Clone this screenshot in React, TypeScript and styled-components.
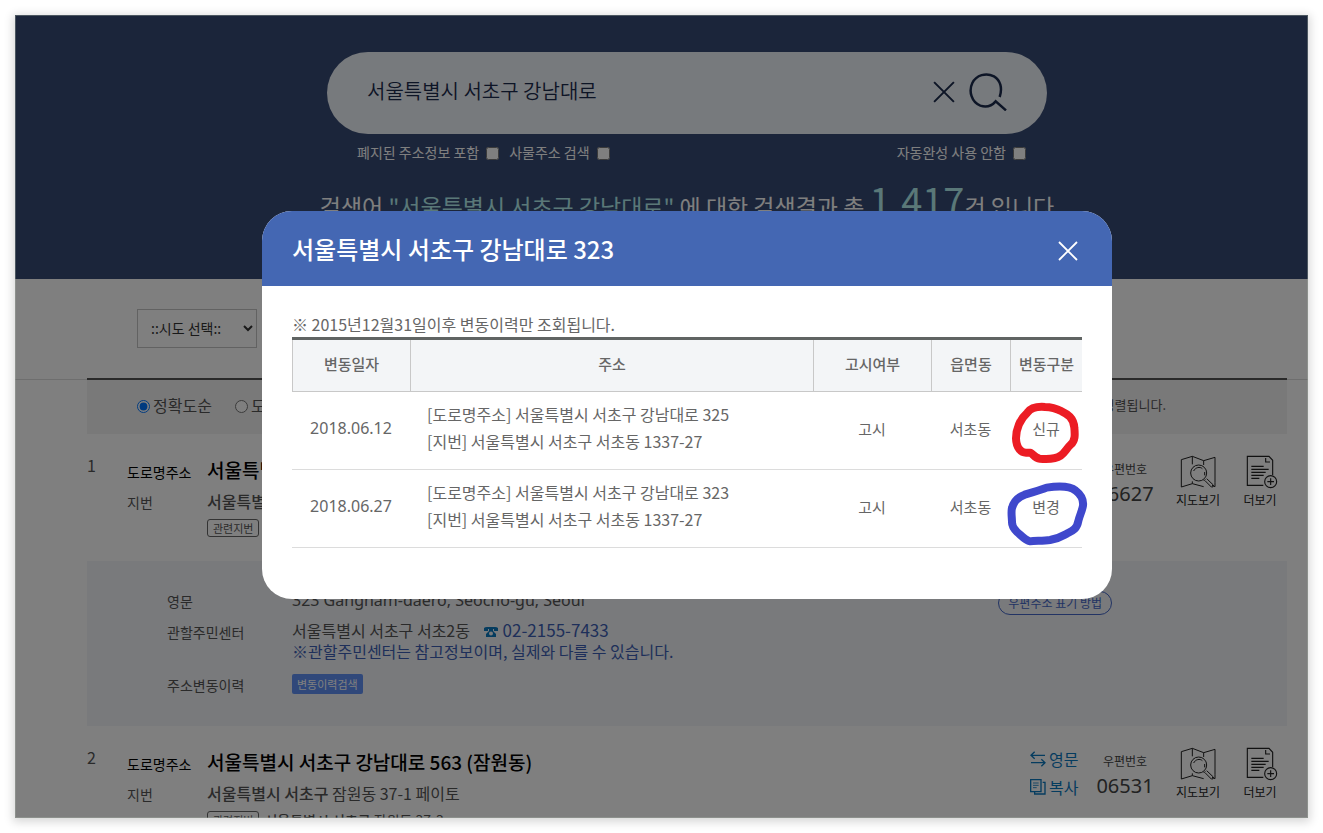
import React, { useState } from "react";
import styled, { createGlobalStyle } from "styled-components";

const latinFont = `"Noto Sans", "Noto Sans CJK KR", sans-serif`;

const GlobalStyle = createGlobalStyle`
  *, *::before, *::after { box-sizing: border-box; }
  body {
    margin: 0;
    background: #fff;
    color: #555;
    font-family: "Noto Sans CJK KR", "Noto Sans", sans-serif;
    font-size: 16px;
    line-height: 24px;
  }
  button, input, select { font-family: inherit; color: inherit; }
  button { padding: 0; border: 0; background: none; cursor: pointer; }
  h1, h2, h3, p, dl, dd, dt, ul { margin: 0; padding: 0; font-weight: 400; }
  ul { list-style: none; }
`;

const Shadow = styled.div`
  height: 100vh;
  padding: 15px;
  overflow: hidden;
`;

const Frame = styled.div`
  position: relative;
  height: 100%;
  overflow: hidden;
  background: #fff;
  box-shadow: 0 2px 9px 2px rgba(0, 0, 0, 0.16);
`;

const Hero = styled.header`
  height: 264px;
  padding: 37px 21px 0 72px;
  background: #364a74;
  color: #fff;
`;

const SearchArea = styled.form`
  max-width: 720px;
  margin: 0 auto;
`;

const SearchBox = styled.div`
  display: flex;
  align-items: center;
  height: 82px;
  padding: 0 40px 2px;
  gap: 14px;
  border-radius: 41px;
  background: #eff4fa;
  color: #1b2a4c;
`;

const SearchInput = styled.input`
  flex: 1;
  min-width: 0;
  padding: 0 0 2px;
  border: 0;
  outline: 0;
  background: transparent;
  font-size: 20px;
  font-weight: 350;
  line-height: 32px;
`;

const IconButton = styled.button`
  display: flex;
  color: inherit;
`;

const SearchOptions = styled.div`
  display: flex;
  gap: 10px;
  padding: 6px 21px 0 30px;
`;

const Check = styled.label<{ $end?: boolean }>`
  display: flex;
  align-items: center;
  gap: 7px;
  margin-left: ${(p) => (p.$end ? "auto" : "0")};
  font-size: 14px;
  line-height: 24px;
  input { width: 13px; height: 13px; margin: 3px 0 0; }
`;

const Summary = styled.h1`
  margin-top: 12px;
  text-align: center;
  white-space: nowrap;
  font-size: 23px;
  line-height: 48px;
`;

const Keyword = styled.span`
  color: #b5f0f0;
`;

const Total = styled.strong`
  color: #b5f0f0;
  font-size: 38px;
  font-weight: 400;
`;

const Filters = styled.section`
  padding: 30px 21px 31px 72px;
  border-bottom: 1px solid #dcdcdc;
`;

const FilterInner = styled.div`
  max-width: 1200px;
  margin: 0 auto;
  padding: 0 50px;
`;

const RegionSelect = styled.select`
  display: block;
  width: 120px;
  height: 39px;
  padding: 0 0 2px 9px;
  border: 1px solid #c4c4c4;
  border-radius: 0;
  background: #fff;
  color: #333;
  font-size: 14px;
`;

const Content = styled.main`
  max-width: 1293px;
  margin: -2px auto 0;
  padding: 0 21px 0 72px;
`;

const SortBar = styled.div`
  display: flex;
  align-items: center;
  height: 56px;
  padding: 0 121px 4px 50px;
  gap: 23px;
  border-top: 2px solid #555;
  background: #f2f2f2;
`;

const Radio = styled.label`
  display: flex;
  align-items: center;
  gap: 3px;
  input { width: 13px; height: 13px; margin: 2px 0 0; }
`;

const SortNote = styled.span`
  margin-left: auto;
  font-size: 13px;
`;

const Item = styled.article`
  display: flex;
  padding: 19px 9px 19px 0;
`;

const Index = styled.span`
  width: 40px;
`;

const Info = styled.dl`
  flex: 1;
  display: grid;
  grid-template-columns: 80px 1fr;
  grid-template-rows: 34px 27px 28px;
  align-items: center;
`;

const InfoLabel = styled.dt<{ $strong?: boolean }>`
  padding-top: 3px;
  color: ${(p) => (p.$strong ? "#000" : "#555")};
  font-size: 14px;
`;

const RoadAddress = styled.dd`
  color: #000;
  font-size: 19px;
  font-weight: 500;
`;

const LotAddress = styled.dd`
  b { font-weight: 500; }
`;

const Related = styled.dd`
  display: flex;
  align-items: center;
  grid-column: 2;
  gap: 5px;
  font-size: 14px;
  b { font-weight: 500; }
`;

const RelatedTag = styled.span`
  padding: 0 5px;
  border: 1px solid #666;
  border-radius: 3px;
  font-size: 11px;
  line-height: 16px;
`;

const Actions = styled.div`
  display: flex;
  gap: 18px;
  color: #444;
`;

const LinkColumn = styled.div`
  width: 48px;
`;

const TextAction = styled.button`
  display: flex;
  align-items: center;
  gap: 3px;
  color: #0b78be;
  font-size: 16px;
  line-height: 28px;
  white-space: nowrap;
`;

const Zip = styled.div`
  width: 58px;
  padding-top: 8px;
  text-align: center;
  font-size: 12px;
  line-height: 16px;
  strong {
    display: block;
    padding-top: 4px;
    font-family: ${latinFont};
    font-size: 20px;
    font-weight: 400;
    line-height: 26px;
  }
`;

const IconAction = styled.button<{ $wide?: boolean }>`
  display: flex;
  flex-direction: column;
  align-items: center;
  align-self: flex-start;
  gap: 2px;
  width: ${(p) => (p.$wide ? 52 : 36)}px;
  padding-top: 2px;
  color: #222;
  font-size: 12px;
  line-height: 18px;
  white-space: nowrap;
`;

const Detail = styled.section`
  padding: 28px 175px 29px 80px;
  background: #f2f4f8;
`;

const DetailRow = styled.div<{ $gap?: number }>`
  display: flex;
  align-items: flex-start;
  margin-top: ${(p) => p.$gap ?? 0}px;
  line-height: 21px;
`;

const DetailLabel = styled.span`
  width: 125px;
  font-size: 14px;
  line-height: 24px;
`;

const DetailValue = styled.div`
  flex: 1;
`;

const English = styled.span`
  font-family: ${latinFont};
`;

const Phone = styled.a`
  margin-left: 10px;
  color: #3d5fb4;
  font-size: 17px;
  line-height: 16px;
  text-decoration: none;
  svg { margin-right: 5px; vertical-align: -1px; }
`;

const Caution = styled.p`
  color: #3d5fb4;
`;

const OutlineButton = styled.button`
  height: 24px;
  margin-top: 2px;
  padding: 0 9px;
  border: 1px solid #4467c8;
  border-radius: 12px;
  color: #4467c8;
  font-size: 12px;
  line-height: 22px;
`;

const HistoryButton = styled.button`
  display: block;
  height: 20px;
  margin-top: 1px;
  padding: 0 5px;
  border-radius: 2px;
  background: #6090f4;
  color: #fff;
  font-size: 11px;
  line-height: 18px;
`;

const Overlay = styled.div`
  position: absolute;
  inset: 0;
  padding: 196px 21px 0 72px;
  background: rgba(0, 0, 0, 0.5);
  box-shadow: inset 0 0 0 1px rgba(170, 180, 170, 0.35);
`;

const Modal = styled.section`
  max-width: 850px;
  margin: 0 auto;
  overflow: hidden;
  border-radius: 30px;
  background: #fff;
`;

const ModalHeader = styled.div`
  display: flex;
  align-items: center;
  justify-content: space-between;
  height: 75px;
  padding: 4px 34px 0 30px;
  background: #4467b3;
  color: #fff;
  h2 { padding-bottom: 4px; font-size: 24px; font-weight: 500; line-height: 36px; }
`;

const ModalBody = styled.div`
  padding: 26px 30px 51px;
  color: #666;
`;

const Notice = styled.p`
  margin-bottom: 1px;
`;

const Table = styled.table`
  width: 100%;
  table-layout: fixed;
  border-collapse: separate;
  border-spacing: 0;
  border-top: 3px solid #606463;
  text-align: center;
`;

const Th = styled.th<{ $w?: number }>`
  width: ${(p) => (p.$w ? `${p.$w}px` : "auto")};
  height: 52px;
  padding: 0 0 4px;
  border-bottom: 1px solid #c8c8c8;
  border-left: 1px solid #c8c8c8;
  background: #f3f5f7;
  font-size: 15px;
  font-weight: 500;
  white-space: nowrap;
`;

const Td = styled.td<{ $left?: boolean }>`
  position: relative;
  height: 78px;
  padding: ${(p) => (p.$left ? "0 17px 6px" : "0 0 5px")};
  border-bottom: 1px solid #dcdcdc;
  text-align: ${(p) => (p.$left ? "left" : "center")};
  font-size: ${(p) => (p.$left ? 16 : 15)}px;
  line-height: 27px;
  time { font-family: ${latinFont}; font-size: 16px; }
`;

const Mark = styled.svg<{ $color: string; $top: number; $left: number }>`
  position: absolute;
  top: ${(p) => p.$top}px;
  left: ${(p) => p.$left}px;
  fill: none;
  stroke: ${(p) => p.$color};
  stroke-width: 24;
  stroke-linecap: round;
  stroke-linejoin: round;
  pointer-events: none;
`;

const CrossIcon = ({ size }: { size: number }) => (
  <svg width={size} height={size} viewBox="0 0 20 20" fill="none" stroke="currentColor" strokeWidth="1.8" aria-hidden="true">
    <path d="M1 1L19 19M19 1L1 19" />
  </svg>
);

const SearchIcon = () => (
  <svg width="38" height="38" viewBox="868 99 114 114" fill="none" stroke="currentColor" strokeWidth="7.5" aria-hidden="true">
    <path d="M960 171C969 144 962 120 943 109C919 97 890 105 878 129C866 154 876 187 902 197C920 203 936 198 948 184L979 211" />
  </svg>
);

const MapIcon = () => (
  <svg width="36" height="34" viewBox="600 84 108 102" fill="none" stroke="currentColor" strokeWidth="3" aria-hidden="true">
    <path d="M637 112V88L604 98V180L637 170L671 179M637 88L671 101L705 91V167V179L696 175M671 101V114M637 163V170" />
    <circle cx="656" cy="138" r="24" />
    <path d="M641 132C646 121 660 118 667 125M674 135V145M675 161L694 180Q701 182 700 174L680 155M671 162L676 157" />
  </svg>
);

const MoreIcon = () => (
  <svg width="36" height="34" viewBox="786 82 108 102" fill="none" stroke="currentColor" strokeWidth="3.4" aria-hidden="true">
    <path d="M850 173H802V86H867L878 98V142M857 91V103H870M814 116H851M814 125H866M814 134H857M814 143H851M814 152H838" />
    <circle cx="872" cy="162" r="18" />
    <path d="M872 152V172M862 162H882" />
  </svg>
);

const SwapIcon = () => (
  <svg width="16" height="16" viewBox="149 101 48 48" fill="none" stroke="currentColor" strokeWidth="4" aria-hidden="true">
    <path d="M163 103L152 114L163 124M152 114H194M183 126L194 136L183 147M194 136H152" />
  </svg>
);

const CopyIcon = () => (
  <svg width="16" height="16" viewBox="149 185 48 48" fill="none" stroke="currentColor" strokeWidth="4" aria-hidden="true">
    <path d="M151 187H182V223H151ZM187 195H194V230H163V225" />
    <path d="M158 197H175M158 204H175M158 211H169" strokeWidth="2.5" />
  </svg>
);

const PhoneIcon = () => (
  <svg width="14" height="12" viewBox="0 0 14 12" fill="#0b78be" aria-hidden="true">
    <path fillRule="evenodd" d="M0 5V2Q1 1 3 1H11Q13 1 14 2V5H10V3H9V5L12 8V11H2V8L5 5V3H4V5ZM7 5.5A2 2 0 1 0 7 9.5A2 2 0 1 0 7 5.5Z" />
  </svg>
);

type Address = { road: string; region: string; lot: string; related: string; zip: string };

const results: Address[] = [
  { road: "서울특별시 서초구 강남대로 323", region: "서울특별시 서초구", lot: "서초동 1337-27", related: "서초동 1337-28", zip: "06627" },
  { road: "서울특별시 서초구 강남대로 563 (잠원동)", region: "서울특별시 서초구", lot: "잠원동 37-1 페이토", related: "잠원동 37-3", zip: "06531" },
];

const history = [
  { date: "2018.06.12", road: "서울특별시 서초구 강남대로 325", kind: "신규" },
  { date: "2018.06.27", road: "서울특별시 서초구 강남대로 323", kind: "변경" },
];

const Result = ({ address, index }: { address: Address; index: number }) => (
  <Item>
    <Index>{index}</Index>
    <Info>
      <InfoLabel $strong>도로명주소</InfoLabel>
      <RoadAddress>{address.road}</RoadAddress>
      <InfoLabel>지번</InfoLabel>
      <LotAddress><b>{address.region}</b> {address.lot}</LotAddress>
      <Related>
        <RelatedTag>관련지번</RelatedTag>
        <span><b>{address.region}</b> {address.related}</span>
      </Related>
    </Info>
    <Actions>
      <LinkColumn>
        <TextAction type="button"><SwapIcon />영문</TextAction>
        <TextAction type="button"><CopyIcon />복사</TextAction>
      </LinkColumn>
      <Zip>우편번호<strong>{address.zip}</strong></Zip>
      <IconAction type="button" $wide><MapIcon />지도보기</IconAction>
      <IconAction type="button"><MoreIcon />더보기</IconAction>
    </Actions>
  </Item>
);

const HistoryDialog = ({ onClose }: { onClose: () => void }) => (
  <Overlay>
    <Modal role="dialog" aria-modal="true" aria-labelledby="history-title">
      <ModalHeader>
        <h2 id="history-title">서울특별시 서초구 강남대로 323</h2>
        <IconButton type="button" aria-label="닫기" onClick={onClose}><CrossIcon size={20} /></IconButton>
      </ModalHeader>
      <ModalBody>
        <Notice>※ 2015년12월31일이후 변동이력만 조회됩니다.</Notice>
        <Table>
          <thead>
            <tr>
              <Th $w={118}>변동일자</Th>
              <Th>주소</Th>
              <Th $w={118}>고시여부</Th>
              <Th $w={79}>읍면동</Th>
              <Th $w={72}>변동구분</Th>
            </tr>
          </thead>
          <tbody>
            {history.map((row) => (
              <tr key={row.date}>
                <Td><time>{row.date}</time></Td>
                <Td $left>[도로명주소] {row.road}<br />[지번] 서울특별시 서초구 서초동 1337-27</Td>
                <Td>고시</Td>
                <Td>서초동</Td>
                <Td>
                  {row.kind}
                  {row.kind === "신규" ? (
                    <Mark $color="#ec1c24" $top={9} $left={0} width="70" height="63" viewBox="90 33 210 189">
                      <path d="M195 51C170 49 153 53 142 68C120 87 108 118 108 145C109 175 124 188 138 188L151 188C160 192 163 204 180 206C205 208 230 205 242 197C254 189 260 175 272 164C286 151 285 135 283 113C281 83 262 72 245 64C230 56 215 51 195 51Z" />
                    </Mark>
                  ) : (
                    <Mark $color="#3f48cc" $top={10} $left={-4} width="83" height="67" viewBox="78 266 249 201">
                      <path d="M200 289C240 283 270 284 287 298C304 311 311 325 309 343C306 360 298 375 295 389C291 411 280 418 262 426C250 432 243 440 210 446C190 449 165 448 150 450C137 448 125 434 111 422C100 411 95 404 96 391C95 370 93 360 96 350C101 330 115 317 134 310C155 303 181 297 200 289Z" />
                    </Mark>
                  )}
                </Td>
              </tr>
            ))}
          </tbody>
        </Table>
      </ModalBody>
    </Modal>
  </Overlay>
);

export default function App() {
  const [open, setOpen] = useState(true);
  const [query, setQuery] = useState("서울특별시 서초구 강남대로");

  return (
    <Shadow>
      <GlobalStyle />
      <Frame>
        <Hero>
          <SearchArea onSubmit={(e) => e.preventDefault()}>
            <SearchBox>
              <SearchInput aria-label="주소 검색" value={query} onChange={(e) => setQuery(e.target.value)} />
              <IconButton type="button" aria-label="지우기" onClick={() => setQuery("")}><CrossIcon size={22} /></IconButton>
              <IconButton type="submit" aria-label="검색"><SearchIcon /></IconButton>
            </SearchBox>
            <SearchOptions>
              <Check>폐지된 주소정보 포함<input type="checkbox" /></Check>
              <Check>사물주소 검색<input type="checkbox" /></Check>
              <Check $end>자동완성 사용 안함<input type="checkbox" /></Check>
            </SearchOptions>
          </SearchArea>
          <Summary>
            검색어 <Keyword>"서울특별시 서초구 강남대로"</Keyword> 에 대한 검색결과 총 <Total>1,417</Total>건 입니다
          </Summary>
        </Hero>
        <Filters>
          <FilterInner>
            <RegionSelect aria-label="시도 선택"><option>::시도 선택::</option></RegionSelect>
          </FilterInner>
        </Filters>
        <Content>
          <SortBar>
            <Radio><input type="radio" name="sort" defaultChecked />정확도순</Radio>
            <Radio><input type="radio" name="sort" />도로명순</Radio>
            <SortNote>정렬됩니다.</SortNote>
          </SortBar>
          <Result address={results[0]} index={1} />
          <Detail>
            <DetailRow>
              <DetailLabel>영문</DetailLabel>
              <DetailValue><English>323 Gangnam-daero, Seocho-gu, Seoul</English></DetailValue>
              <OutlineButton type="button">우편주소 표기 방법</OutlineButton>
            </DetailRow>
            <DetailRow $gap={5}>
              <DetailLabel>관할주민센터</DetailLabel>
              <DetailValue>
                서울특별시 서초구 서초2동 <Phone href="tel:02-2155-7433"><PhoneIcon />02-2155-7433</Phone>
                <Caution>※관할주민센터는 참고정보이며, 실제와 다를 수 있습니다.</Caution>
              </DetailValue>
            </DetailRow>
            <DetailRow $gap={11}>
              <DetailLabel>주소변동이력</DetailLabel>
              <DetailValue>
                <HistoryButton type="button" onClick={() => setOpen(true)}>변동이력검색</HistoryButton>
              </DetailValue>
            </DetailRow>
          </Detail>
          <Result address={results[1]} index={2} />
        </Content>
        {open && <HistoryDialog onClose={() => setOpen(false)} />}
      </Frame>
    </Shadow>
  );
}
